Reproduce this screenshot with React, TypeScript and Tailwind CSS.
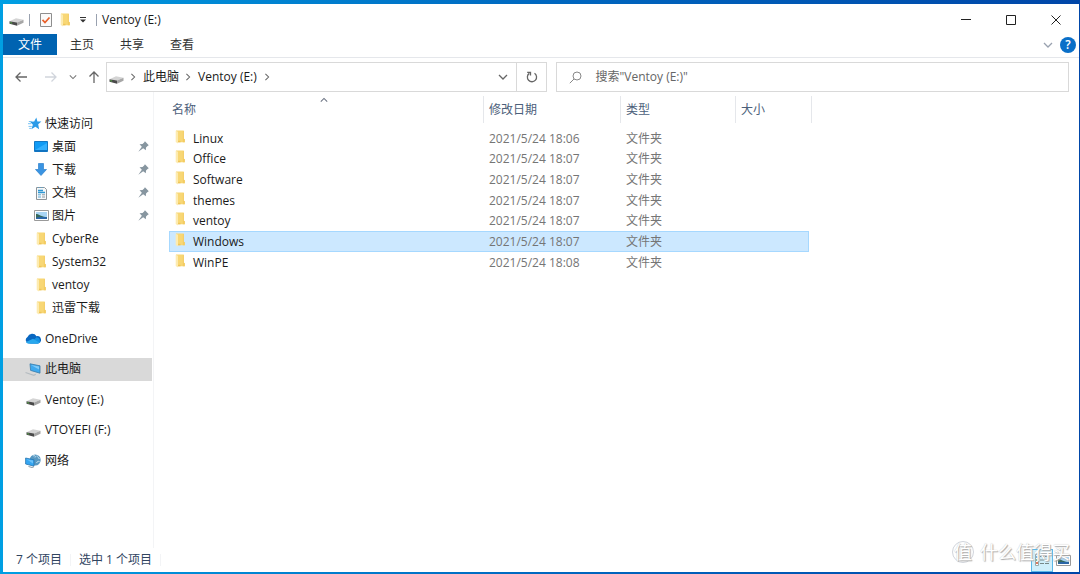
import type { ReactNode } from "react";
import clsx from "clsx";

interface FileRow {
  name: string;
  modified: string;
}

interface NavEntry {
  label: string;
  icon: ReactNode;
  pinned?: boolean;
}

const FolderIcon = () => (
  <svg viewBox="0 0 10 14" className="h-3.5 w-2.5 shrink-0">
    <path d="M1 .5h7.800v8.200l1 .4v3.100H3L1 12z" fill="#f8d775" />
    <path d="M7.800 1h1v8l1 .2v3H7.800z" fill="#f3cb63" />
    <path d="M.7.8 3 1.800v11.700L.7 12z" fill="#fdebb0" />
    <path d="M3 10.800h2.500v1.500H3z" fill="#eec45a" />
  </svg>
);

const DriveIcon = () => (
  <svg viewBox="0 0 15 9" className="h-[9px] w-[15px] shrink-0">
    <path d="M.5 4.200 7 1.200l7.500 1.600L8 5.400z" fill="#d4d4d4" />
    <path d="M.5 4.200 8 5.400v3.400L.5 6.800z" fill="#4a4a4a" />
    <path d="M8 5.400l6.500-2.600v2.900L8 8.800z" fill="#a6a6a6" />
    <path d="M1.300 5.700l1.800.4" stroke="#55b043" strokeWidth="1" />
  </svg>
);

const StarIcon = () => (
  <svg viewBox="0 0 14 13" className="h-[13px] w-3.5 shrink-0">
    <path d="M8.300.4 9.400 4.400l4 .1-3.200 2.800.9 4.900-3.700-2.400-4.100 2.500 1.600-4.600L2 4.700l4.200-.2z" fill="#2b9be8" />
    <path d="M.8 4.500h3M0 6.700h3.200M.5 9.400h3.300M1.200 11.400h2" stroke="#6bbcf2" strokeWidth=".9" />
  </svg>
);

const DesktopIcon = () => (
  <svg viewBox="0 0 14 11" className="h-[11px] w-3.5 shrink-0">
    <path d="M.5.5h13v10H.5z" fill="#109bf5" stroke="#1478c4" />
    <path d="M1 9 13 2v8H1z" fill="#32b0ff" />
    <path d="M1 9.700h12" stroke="#0a66b2" />
  </svg>
);

const DownloadIcon = () => (
  <svg viewBox="0 0 12 13" className="h-[13px] w-3 shrink-0">
    <path d="M3.500.5h5v6h3L6 12.500.5 6.500h3z" fill="#3a94e2" stroke="#2c7fcc" strokeWidth=".7" />
  </svg>
);

const DocumentIcon = () => (
  <svg viewBox="0 0 11 14" className="h-3.5 w-[11px] shrink-0">
    <path d="M.5 1.500h8l2 2v10H.5z" fill="#f6f8f9" stroke="#8d9499" />
    <path d="M2 1.500h6" stroke="#5f9fc4" strokeDasharray="1 1" />
    <path d="M2 4.500h5M2 6.500h7" stroke="#2f97d3" strokeWidth="1.300" />
    <path d="M2 8.800h3M2 11h3" stroke="#5aa9d8" />
    <path d="M6 8.800h3M6 11h3" stroke="#8a98a1" />
  </svg>
);

const PictureIcon = () => (
  <svg viewBox="0 0 15 11" className="h-[11px] w-[15px] shrink-0">
    <path d="M.5.5h14v10H.5z" fill="#fff" stroke="#9a9a9a" />
    <path d="M2 2h11v7H2z" fill="#a9d5f4" />
    <path d="M2 4c2-.5 3 .8 5 1.800S11 7 13 7v2H2z" fill="#37695c" />
    <path d="M2 7.700c4-.8 7-.6 11-.4V9H2z" fill="#2b66a8" />
  </svg>
);

const CloudIcon = () => (
  <svg viewBox="0 0 16 11" className="h-[11px] w-4 shrink-0">
    <path d="M4 10.500A3.500 3.500 0 0 1 2.500 4 5 5 0 0 1 11.500 3.200a3.700 3.700 0 0 1 1.500 7.300z" fill="#0967c1" />
    <path d="M5 10.500 11.500 4.200a3.300 3.300 0 0 1 1.500 6.300z" fill="#1591e3" />
    <path d="M1 9 8 5.700l6.700 4.100c-.5.5-1 .7-1.700.7H4C2.600 10.500 1.500 10 1 9z" fill="#29a8ed" />
  </svg>
);

const ComputerIcon = () => (
  <svg viewBox="0 0 16 13" className="h-[13px] w-4 shrink-0">
    <path d="M5 .8 15 2.800v7.400L5.600 7.400z" fill="#3fa9ee" stroke="#3b7ca9" strokeWidth=".8" />
    <path d="M6 2l8 1.600v3z" fill="#82cbf7" />
    <path d="M.5 9.500l8.300 2.800 2-1.100" fill="none" stroke="#b5bcc1" strokeWidth="1.100" />
  </svg>
);

const NetworkIcon = () => (
  <svg viewBox="0 0 16 14" className="h-3.5 w-4 shrink-0">
    <circle cx="10.200" cy="6" r="5.500" fill="#5797c1" />
    <path d="M8 2c2-1 3 .3 2 1.500M12 1.500c0 2 2 2 2.500 3.500M11.500 9c.5-1.500 2-2 3-1.500" stroke="#c7e2f0" fill="none" />
    <path d="M.6 4 9 5.800v6.400L.6 10z" fill="#35a6f2" stroke="#2876b0" strokeWidth=".8" />
    <path d="M1.500 5.200 8 6.600v3z" fill="#6cc2fa" />
    <path d="M3.500 12.500 7 13.500l2-.8" stroke="#8b9aa5" fill="none" />
  </svg>
);

const PinIcon = () => (
  <svg viewBox="0 0 10 10" className="size-[11px] shrink-0">
    <path d="M6.300.2 9.800 3.800 8.700 4.500 7.300 6 7.100 8.500 4.700 6.500.3 9.700 3.500 5.300 1.400 3l2.700-.2 1.500-1.400z" fill="#8796a0" />
  </svg>
);

const Chevron = ({ d, className }: { d: string; className: string }) => (
  <svg viewBox="0 0 10 10" className={clsx("shrink-0", className)} fill="none" stroke="currentColor" strokeWidth="1.300">
    <path d={d} />
  </svg>
);

const DOWN = "M1 3l4 4 4-4";
const UP = "M1 7l4-4 4 4";
const RIGHT = "M3 1l4 4-4 4";

const quickAccess: NavEntry[] = [
  { label: "桌面", icon: <DesktopIcon />, pinned: true },
  { label: "下载", icon: <DownloadIcon />, pinned: true },
  { label: "文档", icon: <DocumentIcon />, pinned: true },
  { label: "图片", icon: <PictureIcon />, pinned: true },
  { label: "CyberRe", icon: <FolderIcon /> },
  { label: "System32", icon: <FolderIcon /> },
  { label: "ventoy", icon: <FolderIcon /> },
  { label: "迅雷下载", icon: <FolderIcon /> },
];

const places: NavEntry[] = [
  { label: "OneDrive", icon: <CloudIcon /> },
  { label: "此电脑", icon: <ComputerIcon /> },
  { label: "Ventoy (E:)", icon: <span className="mt-1"><DriveIcon /></span> },
  { label: "VTOYEFI (F:)", icon: <span className="mt-1"><DriveIcon /></span> },
  { label: "网络", icon: <NetworkIcon /> },
];

const files: FileRow[] = [
  { name: "Linux", modified: "2021/5/24 18:06" },
  { name: "Office", modified: "2021/5/24 18:07" },
  { name: "Software", modified: "2021/5/24 18:07" },
  { name: "themes", modified: "2021/5/24 18:07" },
  { name: "ventoy", modified: "2021/5/24 18:07" },
  { name: "Windows", modified: "2021/5/24 18:07" },
  { name: "WinPE", modified: "2021/5/24 18:08" },
];

const TitleBar = () => (
  <header className="flex h-[30px] shrink-0 items-center pt-px pl-1.5">
    <span className="mt-1"><DriveIcon /></span>
    <span className="ml-[5px] h-3 w-px bg-gray-400" />
    <button aria-label="属性" className="ml-2.5">
      <svg viewBox="0 0 12 14" className="h-3.5 w-3">
        <path d="M.5.5h11v13H.5z" fill="#fafafa" stroke="#8e8e8e" />
        <path d="M2.500 6.800 5 9.500l4.500-5" fill="none" stroke="#e9602b" strokeWidth="1.700" />
      </svg>
    </button>
    <button aria-label="新建文件夹" className="ml-2"><FolderIcon /></button>
    <button aria-label="自定义快速访问工具栏" className="ml-2.5">
      <svg viewBox="0 0 6 6" className="size-1.5">
        <path d="M0 .5h6" stroke="#333" />
        <path d="M0 2.500h6L3 5.500z" fill="#333" />
      </svg>
    </button>
    <span className="ml-2.5 h-3 w-px bg-gray-400" />
    <h1 className="ml-[5px] flex-1">Ventoy (E:)</h1>
    <button aria-label="最小化" className="flex h-full w-11 items-center justify-center">
      <svg viewBox="0 0 10 10" className="size-2.5" stroke="#222"><path d="M0 4.500h10" /></svg>
    </button>
    <button aria-label="最大化" className="flex h-full w-[45px] items-center justify-center">
      <svg viewBox="0 0 10 10" className="size-2.5" stroke="#222" fill="none"><path d="M.5.5h9v9h-9z" /></svg>
    </button>
    <button aria-label="关闭" className="flex h-full w-[46px] items-center justify-center">
      <svg viewBox="0 0 10 10" className="size-2.5" stroke="#222"><path d="M.5.5l9 9M9.500.5l-9 9" /></svg>
    </button>
  </header>
);

const Ribbon = () => (
  <div className="flex h-6 shrink-0 items-start border-b border-gray-200">
    <button className="h-[21px] w-[54px] bg-[#0063b1] text-white">文件</button>
    {["主页", "共享", "查看"].map((tab) => (
      <button key={tab} className="h-[22px] w-[50px] text-[#333]">{tab}</button>
    ))}
    <button aria-label="展开功能区" className="ml-auto flex h-[21px] items-center text-gray-400">
      <Chevron d={DOWN} className="size-2.5" />
    </button>
    <button aria-label="帮助" className="mr-[3px] ml-[7px] flex h-[21px] items-center">
      <span className="flex size-4 items-center justify-center rounded-full bg-[#0a6fc8] text-xs font-semibold text-white">?</span>
    </button>
  </div>
);

const Arrow = ({ d, label, className }: { d: string; label: string; className: string }) => (
  <button aria-label={label} className={className}>
    <svg viewBox="0 0 12 12" className="size-3" fill="none" stroke="currentColor" strokeWidth="1.300">
      <path d={d} />
    </svg>
  </button>
);

const AddressBar = () => (
  <div className="flex shrink-0 items-center pt-1 pr-2.5 pl-3">
    <Arrow label="后退" d="M12 6H1M5.500 1.500 1 6l4.500 4.500" className="text-[#666]" />
    <Arrow label="前进" d="M0 6h11M6.500 1.500 11 6l-4.500 4.500" className="ml-[18px] text-gray-300" />
    <button aria-label="最近浏览的位置" className="ml-3 text-[#777]"><Chevron d={DOWN} className="size-2" /></button>
    <Arrow label="上移" d="M6 12V1M1.500 5.500 6 1l4.500 4.500" className="ml-[11px] text-[#666]" />
    <nav className="ml-1.5 flex h-[30px] min-w-0 flex-[437] items-center border border-[#d9d9d9] pl-0.5">
      <span className="mt-1"><DriveIcon /></span>
      <Chevron d={RIGHT} className="ml-[5px] size-2 text-[#666]" />
      <a href="#pc" className="ml-1.5">此电脑</a>
      <Chevron d={RIGHT} className="ml-[5px] size-2 text-[#666]" />
      <a href="#ventoy" className="ml-1.5">Ventoy (E:)</a>
      <Chevron d={RIGHT} className="ml-1.5 size-2 text-[#666]" />
      <button aria-label="以前的位置" className="ml-auto px-2 text-[#666]"><Chevron d={DOWN} className="size-2.5" /></button>
      <button aria-label="刷新" className="flex h-full w-[30px] items-center justify-center border-l border-[#d9d9d9] text-[#666]">
        <svg viewBox="0 0 12 12" className="size-3" fill="none" stroke="currentColor" strokeWidth="1.300">
          <path d="M8.500 2.300A4.600 4.600 0 1 1 3.300 2.400M1.200 1.300h3.300v3.200" />
        </svg>
      </button>
    </nav>
    <label className="ml-[9px] flex h-[30px] min-w-0 flex-[498] items-center border border-[#d9d9d9] pl-3">
      <svg viewBox="0 0 13 13" className="size-[13px] shrink-0" fill="none" stroke="#888">
        <circle cx="8" cy="5" r="4" />
        <path d="M5 8 .8 12.200" />
      </svg>
      <input
        aria-label="搜索"
        placeholder={'搜索"Ventoy (E:)"'}
        className="ml-[13px] min-w-0 flex-1 outline-none placeholder:text-[#666]"
      />
    </label>
  </div>
);

const Sidebar = () => (
  <aside className="w-[151px] shrink-0 border-r border-gray-100 pt-5">
    <a href="#quick" className="flex h-[23px] items-center">
      <span className="flex w-[42px] justify-end pr-[3px]"><StarIcon /></span>
      快速访问
    </a>
    {quickAccess.map((entry) => (
      <a key={entry.label} href="#folder" className="flex h-[23px] items-center pr-1 pl-[30px]">
        <span className="flex w-4 justify-center">{entry.icon}</span>
        <span className="ml-[3px] flex-1">{entry.label}</span>
        {entry.pinned && <PinIcon />}
      </a>
    ))}
    <div className="mt-2 flex h-[145px] flex-col justify-between">
      {places.map((entry) => (
        <a
          key={entry.label}
          href="#place"
          className={clsx("mr-px flex h-[23px] items-center pl-[22px]", entry.label === "此电脑" && "bg-[#d9d9d9]")}
        >
          <span className="flex w-4 justify-center">{entry.icon}</span>
          <span className="ml-1">{entry.label}</span>
        </a>
      ))}
    </div>
  </aside>
);

const FileList = () => (
  <main className="min-w-0 flex-1 pt-1 pl-[15px]">
    <table className="w-[643px] table-fixed border-separate border-spacing-0 text-left">
      <colgroup>
        <col className="w-[315px]" />
        <col className="w-[137px]" />
        <col className="w-[115px]" />
        <col className="w-[73px]" />
        <col className="w-[3px]" />
      </colgroup>
      <thead className="text-[#4c607a]">
        <tr className="h-[27px]">
          <th className="relative border-r border-gray-200 p-0 pl-[3px] font-normal">
            <button>名称</button>
            <Chevron d={UP} className="absolute top-0 left-[151px] size-2 text-gray-500" />
          </th>
          <th className="border-r border-gray-200 p-0 pl-[5px] font-normal"><button>修改日期</button></th>
          <th className="border-r border-gray-200 p-0 pl-[5px] font-normal"><button>类型</button></th>
          <th className="p-0 pl-[5px] font-normal"><button>大小</button></th>
          <td className="border-r border-gray-200 p-0" />
        </tr>
        <tr className="h-[5px]"><td colSpan={5} className="p-0" /></tr>
      </thead>
      <tbody className="leading-[18px] text-[#757575]">
        {files.map((file) => {
          const selected = file.name === "Windows";
          const cell = clsx("p-0", selected && "border-y border-[#a6d8ff] bg-[#cce8ff]");
          return (
            <tr key={file.name} className="h-[21px] nth-[3n+2]:h-5" aria-selected={selected}>
              <td className={clsx(cell, selected ? "border-l pl-[5px]" : "pl-1.5")}>
                <div className="flex items-start gap-2 text-[#1a1a1a]">
                  <FolderIcon />
                  {file.name}
                </div>
              </td>
              <td className={clsx(cell, "pl-[5px]")}>{file.modified}</td>
              <td className={clsx(cell, "pl-[5px]")}>文件夹</td>
              <td className={clsx(cell, selected && "border-r")} />
              <td className="p-0" />
            </tr>
          );
        })}
      </tbody>
    </table>
  </main>
);

const StatusBar = () => (
  <footer className="flex h-6 shrink-0 items-center pr-2 pl-[13px] text-[#30445f]">
    <span>7 个项目</span>
    <span className="ml-2 h-3 w-px bg-gray-100" />
    <span className="ml-2">选中 1 个项目</span>
    <span className="ml-2 h-3 w-px bg-gray-100" />
    <button aria-label="详细信息" className="ml-auto flex h-[23px] w-[22px] items-center justify-center border border-[#5bb8e8] bg-[#cfeffb]">
      <svg viewBox="0 0 14 12" className="h-3 w-3.5" fill="none">
        <path d="M.5.5h3v11h-3z" fill="#fff" stroke="#9aa" />
        <path d="M1 3h2" stroke="#3a8fd0" strokeWidth="1.500" />
        <path d="M1 6h2" stroke="#55a055" strokeWidth="1.500" />
        <path d="M1 9h2" stroke="#d0502e" strokeWidth="1.500" />
        <path d="M5 2.500h4M10 2.500h4M5 6h4M10 6h4M5 9.500h4M10 9.500h4" stroke="#788" />
      </svg>
    </button>
    <button aria-label="大缩略图" className="ml-[3px]"><PictureIcon /></button>
  </footer>
);

const Watermark = () => (
  <div className="pointer-events-none absolute right-2.5 bottom-2.5 flex items-center gap-1.5 text-lg leading-6 text-white [text-shadow:1px_1px_1px_#aaa,0_0_1px_#bbb]">
    <span className="flex size-[22px] items-center justify-center rounded-full border border-gray-300">值</span>
    <span>什么值得买</span>
  </div>
);

export default function App() {
  return (
    <div className="relative flex min-h-screen flex-col bg-linear-to-r from-[#009fe3] via-[#0068c0] to-[#0046a8] pt-1 pr-px pb-0.5 pl-[3px] font-['Open_Sans','Noto_Sans_CJK_SC',sans-serif] text-xs text-[#1a1a1a]">
      <div className="flex flex-1 flex-col bg-white">
        <TitleBar />
        <Ribbon />
        <AddressBar />
        <div className="flex flex-1">
          <Sidebar />
          <FileList />
        </div>
        <StatusBar />
      </div>
      <Watermark />
    </div>
  );
}
